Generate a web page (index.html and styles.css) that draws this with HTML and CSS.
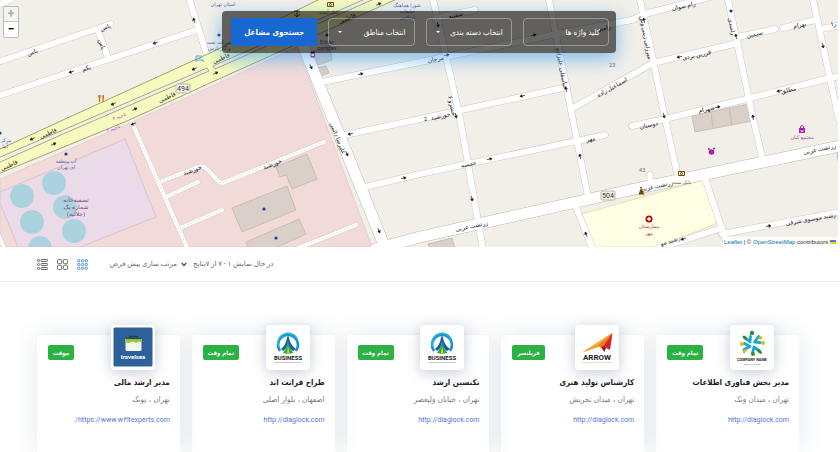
FILE: index.html
```html
<!DOCTYPE html>
<html lang="fa" dir="rtl">
<head>
<meta charset="utf-8">
<title>جستجوی مشاغل</title>
<link rel="stylesheet" href="styles.css">
</head>
<body>
<section class="map">
  <svg class="map-canvas" viewBox="0 0 838 247" preserveAspectRatio="xMidYMid slice" direction="ltr" aria-hidden="true">
    <defs>
      <g id="arrow"><path d="M-3 0H2M2 0L0-1.3V1.3Z" stroke="#222" stroke-width=".7" fill="#222"/></g>
      <g id="minor">
        <path d="M-5 63L111 24M98 30L108 58M-5 97L197 30M-5 6L12 -1M188-5L209 62"/>
        <path d="M322 82L420 62L557 34L632 20L645 14L710 -3M432-5L460 118L483 250M435 18L475 10"/>
        <path d="M548-5L573 120L588 197M576 207L593 250M345 135L420 119L567 87M573 108L653 63L738 43"/>
        <path d="M639-5L653 60L665 118L677 173M727-5L753 118L762 157M738 37L775 29M783 28L815 20M812-5L826 60L839 120M822 29L845 24"/>
        <path d="M632 126L665 119L750 98L830 78L845 75M365 187L420 174L605 135"/>
        <path d="M705 178L729 250M650 251L722 228M722 234L845 211M651 184L650 175"/>
      </g>
      <g id="major"><path d="M303 45L388 255M375 249L420 237L630 190L845 145"/></g>
      <g id="paths"><path d="M130 118L189 252M160 182L195 168Q203 164 209 171L218 181Q221 184 225 182L324 142M166 197L198 182M180 228L222 210M296 249L356 225M-3 232L5 250"/></g>
    </defs>
    <rect width="838" height="247" fill="#f2efe9"/>
    <path d="M0 179L132 122L210 87L297 47L372 247H0Z" fill="#f2dad9" stroke="#dcc4c3" stroke-width=".6"/>
    <path d="M0 192L125 139L156 217L80 247H18L0 203Z" fill="#ebdbe8" stroke="#d3bfcd" stroke-width=".8"/>
    <g fill="#aad3df"><circle cx="22" cy="196" r="12"/><circle cx="54" cy="183" r="12"/><circle cx="65" cy="207" r="12"/><circle cx="32" cy="222" r="12"/><circle cx="74" cy="231" r="12"/><circle cx="40" cy="248" r="12"/></g>
    <path d="M582 214L703 180L717 223L657 247H594Z" fill="#ffffe5" stroke="#e0df9c" stroke-width=".8"/>
    <g fill="#d9d0c9" stroke="#c4b6ab" stroke-width=".8">
      <path d="M276 167L307 154L317 179L292 189L286 175L280 177ZM232 208L287 186L296 210L242 232ZM246 242L299 219L306 234L275 248H248Z"/>
      <path d="M692 116L748 104L752 121L695 132ZM711 112L713 128M729 108L732 125M428 244L452 238L455 248H430ZM314 51L330 46L332 60L318 65ZM317 68L326 66L329 73L320 76ZM837 153L840 152V160L838 161Z"/>
    </g>
    <use href="#minor" class="road minor-case"/>
    <use href="#major" class="road major-case"/>
    <use href="#paths" class="road path-case"/>
    <use href="#minor" class="road minor-fill"/>
    <use href="#major" class="road major-fill"/>
    <use href="#paths" class="road path-fill"/>
    <use href="#paths" class="path-dash"/>
    <path d="M-2 150L63 120L210 53L322 -2H399L210 83L127 121L-2 174Z" fill="#f7fabf" stroke="#9a9c5c" stroke-width=".9"/>
    <path d="M-2 158L70 127L207 68L209 71L70 131L-2 163ZM213 66L365-1H374L215 69Z" fill="#f2efe9" stroke="#96985e" stroke-width=".8"/>

    <g fill="#1c3f94"><circle cx="264" cy="209" r="1.6"/><circle cx="276" cy="238" r="1.6"/><circle cx="66" cy="154" r="1.6"/><circle cx="0" cy="133" r="1.6"/><circle cx="219" cy="35" r="1.6"/><circle cx="327" cy="35" r="1.6"/><circle cx="731" cy="11" r="1.6"/></g>

    <g class="street">
      <text transform="translate(33 54) rotate(-19)">یاس</text>
      <text transform="translate(106 29) rotate(-19)">یاس</text>
      <text transform="translate(100 45) rotate(70)">یاس</text>
      <text transform="translate(87 70) rotate(-18)">بکم</text>
      <text transform="translate(168 99) rotate(-25)">فاطمی</text>
      <text transform="translate(222 60) rotate(-25)">فاطمی</text>
      <text transform="translate(348 20) rotate(-25)">فاطمی</text>
      <text transform="translate(49 135) rotate(-25)">فاطمی</text>
      <text transform="translate(10 167) rotate(-25)">فاطمی</text>
      <text transform="translate(193 172) rotate(-20)">خورشید</text>
      <text transform="translate(273 166) rotate(-21)">خورشید</text>
      <text transform="translate(336 139) rotate(68)">علیرضا دائمی</text>
      <text transform="translate(436 61) rotate(-12)">مرجان</text>
      <text transform="translate(456 17) rotate(-12)">سفینه</text>
      <text transform="translate(450 106) rotate(78)">خسرو ۶</text>
      <text transform="translate(560 69) rotate(80)">عباسقلی علیزاده</text>
      <text transform="translate(441 118) rotate(-12)">خورشید</text>
      <text transform="translate(426 121) rotate(-12)">2</text>
      <text transform="translate(613 89) rotate(-29)">اسماعیل زاده</text>
      <text transform="translate(604 30) rotate(-12)">رامین</text>
      <text transform="translate(644 38) rotate(79)">میرزایی زینی وش</text>
      <text transform="translate(697 57) rotate(-12)">فرزین یزدی</text>
      <text transform="translate(730 27) rotate(79)">رامندی</text>
      <text transform="translate(684 8) rotate(-12)">رام سوان</text>
      <text transform="translate(755 36) rotate(-12)">سیمین</text>
      <text transform="translate(800 27) rotate(-12)">بهرام</text>
      <text transform="translate(834 26) rotate(-12)">را</text>
      <text transform="translate(789 92) rotate(-12)">مطلق</text>
      <text transform="translate(707 111) rotate(-12)">شهرام</text>
      <text transform="translate(649 127) rotate(-12)">دوستان</text>
      <text transform="translate(591 141) rotate(-12)">مهر</text>
      <text transform="translate(469 166) rotate(-12)">خمسه</text>
      <text transform="translate(472 228) rotate(-12)">زرتشت غربی</text>
      <text transform="translate(657 188) rotate(-12)">زرتشت غربی</text>
      <text transform="translate(820 151) rotate(-12)">زرتشت غربی</text>
      <text transform="translate(811 221) rotate(-10)">رشید موسوی شرقی</text>
      <text transform="translate(671 243) rotate(-17)">رشید مو</text>
    </g>
    <g>
      <use href="#arrow" transform="translate(155 43) rotate(162)"/><use href="#arrow" transform="translate(71 72) rotate(162)"/>
      <use href="#arrow" transform="translate(194 69) rotate(155)"/><use href="#arrow" transform="translate(113 104) rotate(155)"/>
      <use href="#arrow" transform="translate(135 109) rotate(-25)"/><use href="#arrow" transform="translate(216 73) rotate(-25)"/>
      <use href="#arrow" transform="translate(32 139) rotate(155)"/><use href="#arrow" transform="translate(54 144) rotate(-25)"/>
      <use href="#arrow" transform="translate(194 20) rotate(-106)"/><use href="#arrow" transform="translate(133 124) rotate(160)"/>
      <use href="#arrow" transform="translate(311 67) rotate(65)"/><use href="#arrow" transform="translate(361 74) rotate(-12)"/>
      <use href="#arrow" transform="translate(347 154) rotate(67)"/><use href="#arrow" transform="translate(379 231) rotate(67)"/>
      <use href="#arrow" transform="translate(350 134) rotate(168)"/><use href="#arrow" transform="translate(404 178) rotate(-12)"/>
      <use href="#arrow" transform="translate(438 25) rotate(77)"/><use href="#arrow" transform="translate(447 55) rotate(-12)"/>
      <use href="#arrow" transform="translate(534 35) rotate(-12)"/><use href="#arrow" transform="translate(522 96) rotate(168)"/>
      <use href="#arrow" transform="translate(566 89) rotate(-100)"/><use href="#arrow" transform="translate(456 116) rotate(77)"/>
      <use href="#arrow" transform="translate(472 199) rotate(79)"/><use href="#arrow" transform="translate(490 159) rotate(-12)"/>
      <use href="#arrow" transform="translate(580 156) rotate(-100)"/><use href="#arrow" transform="translate(586 234) rotate(-112)"/>
      <use href="#arrow" transform="translate(644 20) rotate(-102)"/><use href="#arrow" transform="translate(679 57) rotate(168)"/>
      <use href="#arrow" transform="translate(736 36) rotate(-102)"/><use href="#arrow" transform="translate(823 46) rotate(78)"/>
      <use href="#arrow" transform="translate(779 91) rotate(168)"/><use href="#arrow" transform="translate(718 107) rotate(-12)"/>
      <use href="#arrow" transform="translate(664 116) rotate(78)"/><use href="#arrow" transform="translate(753 117) rotate(-98)"/>
      <use href="#arrow" transform="translate(769 226) rotate(-10)"/><use href="#arrow" transform="translate(683 239) rotate(163)"/>
      <use href="#arrow" transform="translate(379 4) rotate(-25)"/>
    </g>
    <g class="place blue">
      <text x="66" y="163">آب منطقه</text><text x="66" y="169">ای تهران</text>
      <text x="6" y="142">مرکز</text><text x="5" y="148">آما</text>
      <text x="219" y="44">شرکت نفت</text><text x="219" y="50">و گاز پارس</text>
      <text x="407" y="7">شورا هماهنگ</text><text x="407" y="13">تبلیغات</text><text x="407" y="19">اسلامی</text>
      <text x="223" y="6">استان تهران</text><text x="327" y="44">Erbian</text><text x="327" y="50">complex</text>
    </g>
    <g class="place plum">
      <text x="76" y="202">تصفیه‌خانه</text><text x="76" y="209">شماره یک</text><text x="76" y="216">(جلالیه)</text>
    </g>
    <g class="place violet"><text x="802" y="139">مجتمع کیان</text><text transform="translate(120 118) rotate(-20)">ناحیه ۲</text><text transform="translate(114 130) rotate(-20)">ناحیه ۲</text></g>
    <g class="place red"><text x="649" y="228">بیمارستان</text><text x="649" y="235">مهر</text></g>
    <g class="place brown"><text x="682" y="184">بانک سپه</text><text x="329" y="14">بانک آینده</text></g>
    <g class="number"><text x="612" y="67">23</text><text x="642" y="172">43</text></g>
    <g class="shield"><rect x="176" y="84" width="14" height="9" rx="1"/><text x="183" y="91">494</text><rect x="601" y="191" width="14" height="9" rx="1"/><text x="608" y="198">504</text></g>

    <g fill="none" stroke="#c77400"><path d="M99.500 97.500V102M103 95V102" stroke-width="1.300"/><path d="M98.300 95v2.300h2.400V95M99.500 95v2M103.500 95.500v3" stroke-width=".8"/></g>
    <g fill="none" stroke="#3ba0e0" stroke-width=".9"><path d="M196 56v6M196 60h7v2M198 59l4-2M196 56h5"/></g>
    <g fill="#ac1fb0"><path d="M799 128h6v5h-6z"/><path d="M800.500 128v-1.500q1.500-2 3 0v1.500" fill="none" stroke="#ac1fb0"/><circle cx="711.500" cy="152" r="2.800"/><circle cx="709" cy="149" r="1"/><circle cx="714" cy="148.500" r="1"/></g>
    <path d="M801 130v1.500h2v-1.500" stroke="#fff" stroke-width=".7" fill="none"/>
    <circle cx="649" cy="219" r="3.500" fill="#bf0000"/><path d="M649 217v4M647 219h4" stroke="#fff" stroke-width="1.300"/>
    <g fill="none" stroke="#734a08"><path d="M678.500 171.500h6v4h-6zM327.500 2.500h6v4h-6z"/><circle cx="681.500" cy="173.500" r="1"/><circle cx="330.500" cy="4.500" r="1"/><path d="M297 10v7M294 14q3 5 6 0M294 11h6"/></g>
    <path d="M641 188q2 0 1.500 2.500l2 4h-6l1-3zM641 187a1 1 0 1 0 .1 0" fill="#734a08"/>
    <rect x="310.500" y="51.500" width="4.500" height="6" rx="1" fill="#b01738"/><path d="M311.500 54h2.500v2h-2.500z" fill="#fff"/>
  </svg>

  <div class="zoom">
    <button type="button" class="zoom-in" aria-label="بزرگنمایی" disabled>+</button>
    <button type="button" class="zoom-out" aria-label="کوچکنمایی">−</button>
  </div>

  <form class="search">
    <input class="field" type="text" placeholder="کلید واژه ها" aria-label="کلید واژه ها">
    <div class="pick"><select class="field" aria-label="دسته بندی"><option>انتخاب دسته بندی</option></select></div>
    <div class="pick"><select class="field" aria-label="مناطق"><option>انتخاب مناطق</option></select></div>
    <button class="submit" type="button">جستجوی مشاغل</button>
  </form>

  <div class="credit" dir="ltr"><a href="#">Leaflet</a> | © <a href="#">OpenStreetMap</a> contributors <i class="flag"></i></div>
</section>

<div class="toolbar">
  <span class="count">در حال نمایش ۱ - ۷ از ۷نتایج</span>
  <div class="sort">
    <select aria-label="مرتب سازی"><option>مرتب سازی پیش فرض</option></select>
    <svg viewBox="0 0 6 5"><path d="M.8 1L3 3.600L5.200 1"/></svg>
  </div>
  <div class="views">
    <button type="button" class="view active" aria-label="شبکه سه ستونه"><svg viewBox="0 0 11 11"><g><circle cx="1.700" cy="1.700" r="1.200"/><circle cx="5.500" cy="1.700" r="1.200"/><circle cx="9.300" cy="1.700" r="1.200"/><circle cx="1.700" cy="5.500" r="1.200"/><circle cx="5.500" cy="5.500" r="1.200"/><circle cx="9.300" cy="5.500" r="1.200"/><circle cx="1.700" cy="9.300" r="1.200"/><circle cx="5.500" cy="9.300" r="1.200"/><circle cx="9.300" cy="9.300" r="1.200"/></g></svg></button>
    <button type="button" class="view" aria-label="شبکه دو ستونه"><svg viewBox="0 0 11 11"><rect x=".5" y=".5" width="4.200" height="4.200" rx="1"/><rect x="6.300" y=".5" width="4.200" height="4.200" rx="1"/><rect x=".5" y="6.300" width="4.200" height="4.200" rx="1"/><rect x="6.300" y="6.300" width="4.200" height="4.200" rx="1"/></svg></button>
    <button type="button" class="view" aria-label="فهرست"><svg viewBox="0 0 11 11"><rect x=".5" y=".5" width="2" height="2" rx=".7"/><rect x="4" y=".5" width="6.500" height="2" rx=".7"/><rect x=".5" y="4.500" width="2" height="2" rx=".7"/><rect x="4" y="4.500" width="6.500" height="2" rx=".7"/><rect x=".5" y="8.500" width="2" height="2" rx=".7"/><rect x="4" y="8.500" width="6.500" height="2" rx=".7"/></svg></button>
  </div>
</div>

<main class="jobs">
  <article class="card">
    <div class="top">
      <div class="logo"><svg viewBox="0 0 44 44">
        <g fill="none" stroke-width="2.800" stroke-linecap="round" stroke-linejoin="round">
          <path d="M15 12.500L20 17L20.500 11.500M28.500 11.500L24.500 17L30 17.500M14 24.500L20 21.500L14.500 18.500M22.500 28L24 22L29.500 26" stroke="#14a9cf"/>
        </g>
        <circle cx="22" cy="8" r="2.200" fill="#2f8a35"/><circle cx="23" cy="29" r="2" fill="#2f8a35"/><circle cx="12" cy="19" r="2" fill="#deb51f"/><circle cx="33" cy="18" r="2" fill="#deb51f"/><path d="M14 12l2 2M30.500 27.500l-2-2" stroke="#2f8a35" stroke-width="2.800" stroke-linecap="round"/><path d="M14 27l1.500-1.500M31 12.500l-1 1" stroke="#deb51f" stroke-width="2.600" stroke-linecap="round"/>
        <text class="logo-text" x="22" y="36" font-size="3.800">COMPANY NAME</text><text class="logo-sub" x="22" y="39.500" font-size="2.500">TAGLINE HERE</text></svg></div>
      <span class="badge">تمام وقت</span>
    </div>
    <h2>مدیر بخش فناوری اطلاعات</h2><p>تهران ، میدان ونک</p><a href="#">http://diaglock.com</a>
  </article>
  <article class="card">
    <div class="top">
      <div class="logo"><svg viewBox="0 0 44 44">
        <path d="M8 27L37.500 8L24 21Z" fill="#f9a825"/><path d="M8 27L37.500 8L29 24.500L24 21.500Z" fill="#f47a1f"/><path d="M8 27L37.500 8L22 21Z" fill="#fbb02a"/><path d="M37.500 8L35 25L29 20.500Z" fill="#d8232a"/><path d="M29 20.500L35 25L31 23L29.500 27L26 22.500Z" fill="#b5121b"/>
        <text class="logo-text" x="22" y="34.500" font-size="8">ARROW</text><text x="22" y="37.500" font-size="2.500" text-anchor="middle" fill="#f2a35e">YOUR TAGLINE GOES HERE</text></svg></div>
      <span class="badge">فریلنسر</span>
    </div>
    <h2>کارشناس تولید هنری</h2><p>تهران ، میدان تجریش</p><a href="#">http://diaglock.com</a>
  </article>
  <article class="card">
    <div class="top">
      <div class="logo"><svg viewBox="0 0 44 44">
        <path d="M14 26A10 10 0 1 1 30 26" fill="none" stroke="#1b8fd0" stroke-width="2.600"/><path d="M12.500 22A10 10 0 0 1 31.500 15" fill="none" stroke="#24b4d8" stroke-width="1.800"/>
        <path d="M15 24Q20 20 21 12.500L22 11L23 12.500Q24 20 30 24L27 26Q23 23 22 18Q21 23 17 26Z" fill="#145da8"/><path d="M17 28Q21.500 22 22 14Q22.500 22 27.500 28L22 29Z" fill="#2fa64a"/><path d="M21 28.500L22 21L23.500 28.500Z" fill="#d9e021"/>
        <text class="logo-text" x="22" y="34.500" font-size="6">BUSINESS</text><text class="logo-sub" x="22" y="38" font-size="2">CONSTRUCTION OF BUILDING</text></svg></div>
      <span class="badge">تمام وقت</span>
    </div>
    <h2>تکنسین ارشد</h2><p>تهران ، خیابان ولیعصر</p><a href="#">http://diaglock.com</a>
  </article>
  <article class="card">
    <div class="top">
      <div class="logo"><svg viewBox="0 0 44 44">
        <path d="M14 26A10 10 0 1 1 30 26" fill="none" stroke="#1b8fd0" stroke-width="2.600"/><path d="M12.500 22A10 10 0 0 1 31.500 15" fill="none" stroke="#24b4d8" stroke-width="1.800"/>
        <path d="M15 24Q20 20 21 12.500L22 11L23 12.500Q24 20 30 24L27 26Q23 23 22 18Q21 23 17 26Z" fill="#145da8"/><path d="M17 28Q21.500 22 22 14Q22.500 22 27.500 28L22 29Z" fill="#2fa64a"/><path d="M21 28.500L22 21L23.500 28.500Z" fill="#d9e021"/>
        <text class="logo-text" x="22" y="34.500" font-size="6">BUSINESS</text><text class="logo-sub" x="22" y="38" font-size="2">CONSTRUCTION OF BUILDING</text></svg></div>
      <span class="badge">تمام وقت</span>
    </div>
    <h2>طراح فرانت اند</h2><p>اصفهان ، بلوار اصلی</p><a href="#">http://diaglock.com</a>
  </article>
  <article class="card">
    <div class="top">
      <div class="logo"><svg viewBox="0 0 44 44">
        <rect x="2.500" y="2.500" width="39" height="39" rx="1.500" fill="#2d6199"/><path d="M19 13V11.500H26V13" fill="none" stroke="#1c3e63" stroke-width="1.500"/><rect x="14.500" y="13" width="16" height="13" rx="1.500" fill="#f4f5ee"/><path d="M14.500 17.500V13H30.500V17.500L28 16.500L25 18L22 16.500L18 18Z" fill="#9acb2a"/><rect x="14.500" y="12.600" width="16" height="1.500" fill="#24486e"/>
        <text x="22" y="33.500" font-size="6" font-weight="700" fill="#fff" text-anchor="middle">travelsea</text></svg></div>
      <span class="badge">موقت</span>
    </div>
    <h2>مدیر ارشد مالی</h2><p>تهران ، پونک</p><a href="#">https://www.w۳itexperts.com/</a>
  </article>
</main>
</body>
</html>
```
FILE: styles.css
```css
* { box-sizing: border-box; }

body {
  margin: 0;
  min-height: 100vh;
  display: flex;
  flex-direction: column;
  background: #fff;
  color: #222;
  font-family: Roboto, "DejaVu Sans", sans-serif;
  overflow-x: hidden;
}

button, input, select { font: inherit; margin: 0; padding: 0; }
a { text-decoration: none; }

/* map */
.map {
  position: relative;
  height: 247px;
  margin-right: 2px;
  padding-top: 11px;
  overflow: hidden;
}
.map-canvas { position: absolute; inset: 0; width: 100%; height: 100%; }
.road, .path-dash { fill: none; stroke-linecap: round; stroke-linejoin: round; }
.minor-case { stroke: #cbc9c5; stroke-width: 7px; }
.minor-fill { stroke: #fff; stroke-width: 6px; }
.major-case { stroke: #bbb9b5; stroke-width: 12px; }
.major-fill { stroke: #fff; stroke-width: 11px; }
.path-case { stroke: #d8cccb; stroke-width: 5px; }
.path-fill { stroke: #fff; stroke-width: 4px; }
.path-dash { stroke: #e2e2e2; stroke-width: 1px; stroke-dasharray: 1 3; }
.map-canvas text { text-anchor: middle; font-size: 6px; }
.street { fill: #222; }
.map-canvas .place text { font-size: 5px; }
.blue { fill: #4668b0; }
.plum { fill: #7d4a78; }
.map-canvas .plum text { font-size: 6px; }
.violet { fill: #a64fb0; }
.red { fill: #c62b34; }
.brown { fill: #8a6128; }
.number { fill: #777; }
.shield rect { fill: #f3f0e4; stroke: #b9b8a8; stroke-width: 1px; }
.map-canvas .shield text { fill: #333; font-size: 7px; }

.zoom {
  position: absolute;
  top: 6px;
  left: 3px;
  width: 16px;
  border: 1px solid #bbb;
  border-radius: 2px;
  overflow: hidden;
}
.zoom button {
  display: block;
  width: 100%;
  height: 15px;
  border: 0;
  background: #fff;
  color: #000;
  font-size: 12px;
  font-weight: 700;
  line-height: 15px;
}
.zoom .zoom-in { background: #f4f4f4; color: #aaa; border-bottom: 1px solid #ccc; }

.search {
  position: relative;
  display: grid;
  grid-template-columns: repeat(4, 1fr);
  gap: 11px;
  width: 47%;
  min-width: 393px;
  margin: 0 auto;
  padding: 7px 7px 7px 9px;
  border-radius: 4px;
  background: rgba(0, 0, 0, .6);
  box-shadow: 0 6px 18px rgba(64, 160, 235, .65);
}
.pick { position: relative; }
.pick::after {
  content: "";
  position: absolute;
  left: 10px;
  top: 13px;
  border: 2px solid transparent;
  border-top-color: #fff;
}
.field {
  display: block;
  width: 100%;
  height: 28px;
  padding: 0 8px;
  border: 1px solid rgba(255, 255, 255, .35);
  border-radius: 4px;
  background: transparent;
  color: #fff;
  font-size: 8px;
  font-family: Roboto, "DejaVu Sans Condensed", "DejaVu Sans", sans-serif;
  appearance: none;
  outline: 0;
}
.field::placeholder { color: #fff; opacity: 1; }
.submit {
  height: 28px;
  border: 0;
  border-radius: 3px;
  background: #1967d2;
  color: #fff;
  font-family: "DejaVu Sans Condensed", "DejaVu Sans", sans-serif;
  font-size: 8px;
  font-weight: 700;
}

.credit {
  position: absolute;
  right: 0;
  bottom: 0;
  padding: 0 2px 0 1px;
  background: rgba(255, 255, 255, .8);
  color: #333;
  font: 6px/10px "Liberation Sans", sans-serif;
}
.credit a { color: #0078a8; }
.flag {
  display: inline-block;
  width: 6px;
  height: 4px;
  background: linear-gradient(#4c7be1 50%, #ffd500 50%);
}

/* sorting */
.toolbar {
  display: flex;
  justify-content: flex-end;
  align-items: center;
  gap: 6px;
  height: 35px;
  padding-left: 37px;
  border-bottom: 1px solid #f0f0f0;
  color: #696969;
  font-size: 7px;
}
.sort { display: flex; flex-direction: row-reverse; align-items: center; gap: 4px; }
.sort select { border: 0; background: none; color: #696969; appearance: none; }
.sort svg { width: 6px; height: 5px; fill: none; stroke: #444; stroke-width: 1.3; }
.views { display: flex; gap: 9px; margin-right: 15px; }
.view { display: block; width: 11px; height: 11px; border: 0; background: none; }
.view svg { display: block; width: 11px; height: 11px; fill: none; stroke: #666; stroke-width: 1; }
.view.active svg { stroke: #4d8be8; }

/* job cards */
.jobs {
  flex: 1;
  display: grid;
  grid-template-columns: repeat(5, 1fr);
  gap: 12px;
  padding: 53px 41px 0 37px;
  overflow: hidden;
}
.card {
  padding: 0 10px;
  border-radius: 4px 4px 0 0;
  background: #fff;
  box-shadow: 0 0 24px rgba(60, 95, 125, .14);
}
.top {
  display: flex;
  justify-content: space-between;
  align-items: center;
  height: 35px;
  padding-right: 15px;
  padding-left: 1px;
}
.logo {
  width: 44px;
  height: 45px;
  margin-top: -10px;
  border-radius: 4px;
  background: #fff;
  box-shadow: 0 3px 14px rgba(50, 80, 120, .28);
}
.logo svg { display: block; width: 44px; height: 44px; }
.logo-text { fill: #222; font-weight: 700; text-anchor: middle; }
.logo-sub { fill: #777; text-anchor: middle; }
.badge {
  padding: 0 5px;
  border-radius: 2px;
  background: #2bb144;
  color: #fff;
  font-family: "DejaVu Sans Condensed", "DejaVu Sans", sans-serif;
  font-size: 6px;
  font-weight: 700;
  line-height: 15px;
}
.card h2 {
  margin: 5px 0 0;
  color: #1a1a1a;
  font-family: "DejaVu Sans Condensed", "DejaVu Sans", sans-serif;
  font-size: 8px;
  font-weight: 700;
  line-height: 16px;
  white-space: nowrap;
}
.card p {
  margin: 0;
  color: #777;
  font-family: "DejaVu Sans Condensed", "DejaVu Sans", sans-serif;
  font-size: 8px;
  line-height: 18px;
}
.card a { display: block; color: #5577d5; font-size: 7px; line-height: 22px; }
```
